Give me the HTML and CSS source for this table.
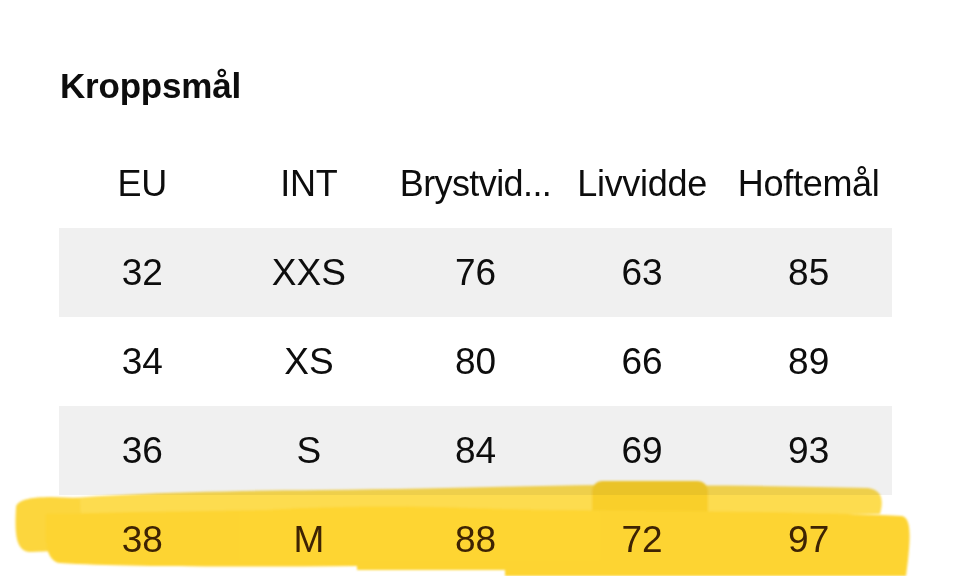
FILE: index.html
```html
<!DOCTYPE html>
<html lang="no">
<head>
<meta charset="utf-8">
<title>Kroppsmål</title>
<link rel="stylesheet" href="styles.css">
</head>
<body>
<main class="page">
  <h1 class="title">Kroppsmål</h1>
  <table class="sizes">
    <thead>
      <tr><th>EU</th><th>INT</th><th class="narrow">Brystvid...</th><th>Livvidde</th><th>Hoftemål</th></tr>
    </thead>
    <tbody>
      <tr class="alt"><td>32</td><td>XXS</td><td>76</td><td>63</td><td>85</td></tr>
      <tr><td>34</td><td>XS</td><td>80</td><td>66</td><td>89</td></tr>
      <tr class="alt"><td>36</td><td>S</td><td>84</td><td>69</td><td>93</td></tr>
      <tr class="marked"><td>38</td><td>M</td><td>88</td><td>72</td><td>97</td></tr>
    </tbody>
  </table>
  <svg class="marker" viewBox="0 478 960 98" width="960" height="98" aria-hidden="true">
    <defs>
      <filter id="soft" x="-5%" y="-20%" width="110%" height="140%">
        <feGaussianBlur stdDeviation="1.2"/>
      </filter>
    </defs>
    <g filter="url(#soft)">
      <path d="M22 503 C 90 494, 200 491, 320 490 C 430 489, 520 486, 600 485 C 700 485, 800 486, 868 488 C 882 490, 884 500, 880 514 L 40 520 C 24 520, 18 510, 22 503 Z" fill="#fddc50"/>
      <rect x="592" y="481" width="116" height="40" rx="10" fill="#f9cf2c"/>
      <path d="M16 508 C 16 500, 30 497, 52 497 L 80 498 L 82 550 L 30 552 C 18 551, 14 540, 16 508 Z" fill="#fcd63c"/>
      <path d="M46 514 C 200 510, 400 508, 560 510 C 700 511, 820 512, 902 516 C 912 518, 910 540, 908 560 L 906 576 L 505 576 L 505 570 L 357 570 L 357 566 C 250 567, 120 567, 60 563 C 46 561, 44 540, 46 514 Z" fill="#fdd433"/>
      <path d="M240 512 C 300 507, 380 505, 470 508 L 600 512 L 600 560 L 240 560 Z" fill="#fed532"/>
    </g>
  </svg>
</main>
</body>
</html>
```
FILE: styles.css
```css
html, body {
  margin: 0;
  padding: 0;
  overflow: hidden;
  background: #ffffff;
}

.page {
  position: relative;
  padding: 66px 0 0 59px;
  font-family: "Liberation Sans", Arial, sans-serif;
  color: #0d0d0d;
}

.title {
  margin: 0 0 34px 1px;
  font-size: 35px;
  line-height: 40px;
  font-weight: 700;
  letter-spacing: -0.2px;
}

.sizes {
  width: 833px;
  table-layout: fixed;
  border-collapse: collapse;
  border-spacing: 0;
}

.sizes th,
.sizes td {
  height: 88px;
  padding: 0 4px;
  text-align: center;
  white-space: nowrap;
  font-weight: 400;
}

.sizes th {
  font-size: 36px;
  line-height: 88px;
  letter-spacing: -0.3px;
}

.sizes th.narrow {
  padding: 0;
  letter-spacing: -0.6px;
}

.sizes td {
  font-size: 37px;
  line-height: 88px;
  padding-top: 1px;
}

.sizes .alt td {
  background: #f0f0f0;
}

.sizes .marked td {
  color: #3e2a0c;
}

.marker {
  position: absolute;
  left: 0;
  top: 478px;
  mix-blend-mode: multiply;
  pointer-events: none;
}
```
